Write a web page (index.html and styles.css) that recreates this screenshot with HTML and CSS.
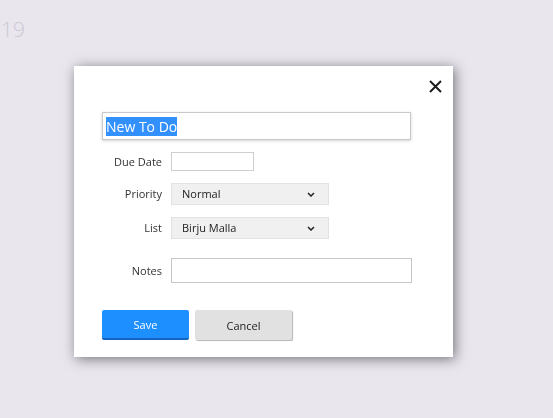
FILE: index.html
```html
<!DOCTYPE html>
<html lang="en">
<head>
  <meta charset="UTF-8">
  <meta name="viewport" content="width=device-width, initial-scale=1.0">
  <title>New To Do</title>
  <link rel="stylesheet" href="styles.css">
</head>
<body>
  <div class="page-year">19</div>

  <div class="overlay">
    <div class="dialog">
      <button class="close" aria-label="Close">
        <svg width="13" height="13" viewBox="0 0 13 13">
          <path d="M1 1 L12 12 M12 1 L1 12" stroke="#1a1a1a" stroke-width="1.9" fill="none"/>
        </svg>
      </button>

      <div class="title-input"><span class="selected">New To Do</span></div>

      <div class="row row-date">
        <label>Due Date</label>
        <div class="date-input"></div>
      </div>

      <div class="row row-priority">
        <label>Priority</label>
        <div class="select">
          <span>Normal</span>
          <svg width="8" height="5" viewBox="0 0 8 5">
            <path d="M1 1 L4 4 L7 1" stroke="#222" stroke-width="1.5" fill="none"/>
          </svg>
        </div>
      </div>

      <div class="row row-list">
        <label>List</label>
        <div class="select">
          <span>Birju Malla</span>
          <svg width="8" height="5" viewBox="0 0 8 5">
            <path d="M1 1 L4 4 L7 1" stroke="#222" stroke-width="1.5" fill="none"/>
          </svg>
        </div>
      </div>

      <div class="row row-notes">
        <label>Notes</label>
        <div class="notes-input"></div>
      </div>

      <div class="buttons">
        <button class="btn btn-save">Save</button>
        <button class="btn btn-cancel">Cancel</button>
      </div>
    </div>
  </div>
</body>
</html>
```

FILE: styles.css
```css
body {
  font-family: 'Open Sans', 'Noto Sans', sans-serif;
  background-color: #e9e6ee;
  margin: 0;
  height: 100vh;
  overflow: hidden;
}

.page-year {
  font-size: 21px;
  font-weight: 300;
  color: #cdc9d3;
  margin: 17px 0 0 1px;
  line-height: 24px;
}

.overlay {
  position: fixed;
  top: 0;
  left: 0;
  right: 0;
  bottom: 0;
  padding: 66px 0 0 74px;
}

.dialog {
  position: relative;
  width: 379px;
  height: 291px;
  box-sizing: border-box;
  padding: 46px 0 0 28px;
  background-color: #fff;
  box-shadow: 2px 2px 12px rgba(0, 0, 0, 0.5);
}

.close {
  position: absolute;
  top: 14px;
  right: 11px;
  padding: 0;
  border: none;
  background: none;
  display: flex;
  cursor: pointer;
}

.title-input {
  width: 309px;
  height: 28px;
  box-sizing: border-box;
  border: 1px solid #c9c9c9;
  box-shadow: 0 1px 3px rgba(0, 0, 0, 0.18);
  padding: 0 3px;
  display: flex;
  align-items: center;
}

.selected {
  font-size: 14px;
  line-height: 19px;
  color: #fff;
  background-color: #3390ff;
}

.row {
  display: flex;
  align-items: center;
  font-size: 11px;
  line-height: 14px;
  color: #333;
}

.row label {
  width: 60px;
  margin-right: 9px;
  text-align: right;
}

.row-date {
  margin-top: 12px;
}

.row-priority {
  margin-top: 12px;
}

.row-list {
  margin-top: 12px;
}

.row-notes {
  margin-top: 19px;
}

.date-input {
  width: 83px;
  height: 19px;
  box-sizing: border-box;
  border: 1px solid #cfcfcf;
}

.select {
  width: 158px;
  height: 22px;
  box-sizing: border-box;
  padding: 0 13px 0 10px;
  background-color: #f0f0f0;
  border: 1px solid #e2e2e2;
  display: flex;
  align-items: center;
  justify-content: space-between;
  color: #222;
}

.notes-input {
  width: 241px;
  height: 25px;
  box-sizing: border-box;
  border: 1px solid #c6c6c6;
}

.buttons {
  display: flex;
  gap: 6px;
  margin-top: 27px;
}

.btn {
  height: 30px;
  font-family: inherit;
  font-size: 11px;
  border: none;
  border-radius: 2px;
  cursor: pointer;
}

.btn-save {
  width: 87px;
  background-color: #1e8fff;
  border-bottom: 2px solid #1763c0;
  color: #fff;
}

.btn-cancel {
  width: 97px;
  background-color: #e1e1e1;
  box-shadow: 1px 1px 1px #b5b5b5;
  color: #222;
}
```
